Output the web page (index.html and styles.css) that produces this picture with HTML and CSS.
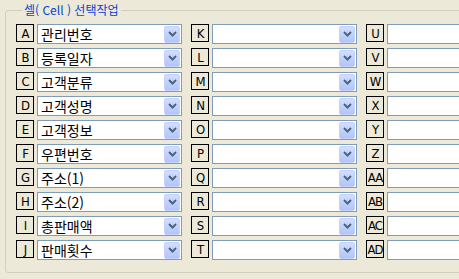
FILE: index.html
```html
<!DOCTYPE html>
<html lang="ko">
<head>
    <meta charset="UTF-8">
    <title>셀 선택작업</title>
    <link rel="stylesheet" href="styles.css">
</head>
<body>

    <!-- Cell selection group -->
    <fieldset class="group">
        <legend>셀( Cell ) 선택작업</legend>
        <div class="cells" id="cells"></div>
    </fieldset>

    <script>
        // Column letters and the field assigned to each
        const cells = [
            ["A", "관리번호"], ["B", "등록일자"], ["C", "고객분류"], ["D", "고객성명"],
            ["E", "고객정보"], ["F", "우편번호"], ["G", "주소(1)"], ["H", "주소(2)"],
            ["I", "총판매액"], ["J", "판매횟수"],
            ["K", ""], ["L", ""], ["M", ""], ["N", ""], ["O", ""],
            ["P", ""], ["Q", ""], ["R", ""], ["S", ""], ["T", ""],
            ["U", ""], ["V", ""], ["W", ""], ["X", ""], ["Y", ""],
            ["Z", ""], ["AA", ""], ["AB", ""], ["AC", ""], ["AD", ""]
        ];

        const arrow = '<svg width="9" height="6" viewBox="0 0 9 6"><polyline points="1,1 4.5,4.5 8,1" fill="none" stroke="#4d6185" stroke-width="2"/></svg>';

        const box = document.getElementById("cells");
        cells.forEach(([col, field]) => {
            const cell = document.createElement("div");
            cell.className = "cell";
            cell.innerHTML = `
                <span class="col">${col}</span>
                <div class="combo">
                    <span class="value">${field}</span>
                    <span class="drop">${arrow}</span>
                </div>
            `;
            box.appendChild(cell);
        });
    </script>

</body>
</html>
```

FILE: styles.css
```css
/* Page */
html, body {
    overflow: hidden;
}

body {
    margin: 0;
    width: 459px;
    height: 279px;
    background-color: #ece9d8;
    font-family: "Noto Sans CJK KR", "DejaVu Sans", sans-serif;
}

/* Group box */
.group {
    margin: 2px 0 0 5px;
    padding: 6px 0 12px 10px;
    width: 600px;
    border: 1px solid #d0d0bf;
    border-radius: 3px;
}

.group legend {
    margin-left: 6px;
    padding: 0 2px;
    color: #0046d5;
    font-size: 12px;
    line-height: 16px;
}

/* Grid of cells, filled column by column */
.cells {
    display: grid;
    grid-auto-flow: column;
    grid-template-rows: repeat(10, 20px);
    grid-auto-columns: 166px;
    row-gap: 4px;
    column-gap: 9px;
}

.cell {
    display: flex;
    align-items: flex-start;
    gap: 3px;
}

.col {
    width: 16px;
    height: 16px;
    border: 1px solid #000;
    display: flex;
    align-items: center;
    justify-content: center;
    font-family: "DejaVu Sans Condensed", "DejaVu Sans", sans-serif;
    font-size: 13px;
    letter-spacing: -1px;
    color: #000;
}

/* Combo box */
.combo {
    width: 143px;
    height: 18px;
    border: 1px solid #7f9db9;
    background-color: #fff;
    display: flex;
    align-items: center;
    justify-content: space-between;
}

.value {
    padding-left: 3px;
    font-size: 14px;
    line-height: 18px;
    color: #000;
}

.drop {
    width: 14px;
    height: 15px;
    margin-right: 1px;
    border: 1px solid #c3d3fd;
    border-radius: 2px;
    background: linear-gradient(#d2defc, #b0c6f7);
    display: flex;
    align-items: center;
    justify-content: center;
}
```
